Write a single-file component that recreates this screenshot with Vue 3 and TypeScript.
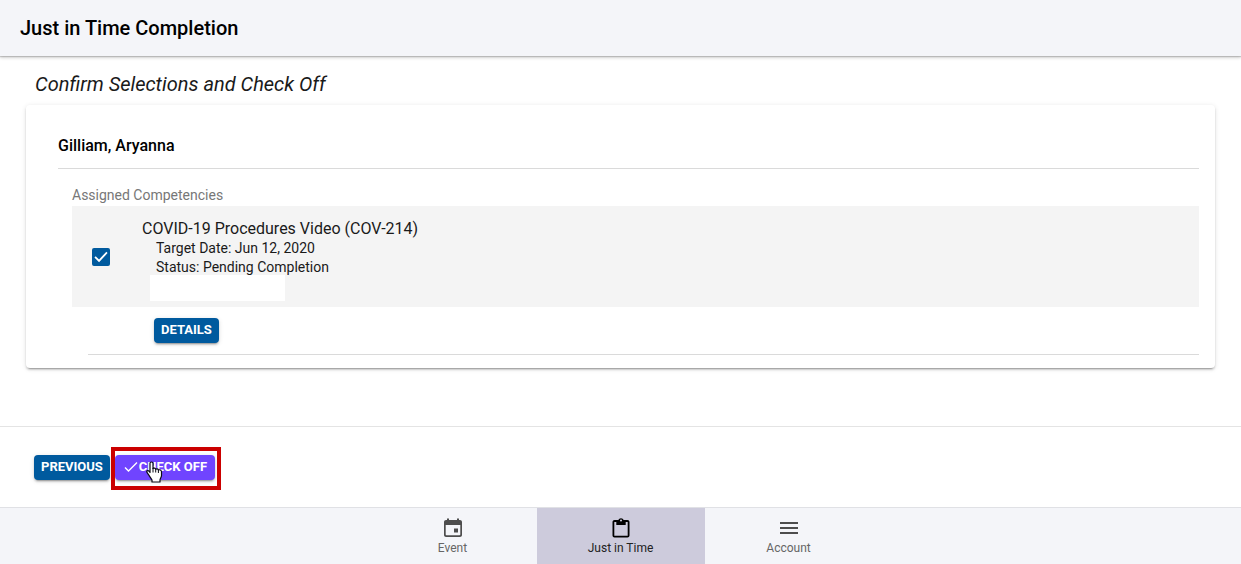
<script setup lang="ts">
import { ref } from 'vue'

interface Competency {
  id: string
  title: string
  targetDate: string
  status: string
}

const person = 'Gilliam, Aryanna'
const competencies: Competency[] = [
  {
    id: 'cov-214',
    title: 'COVID-19 Procedures Video (COV-214)',
    targetDate: 'Jun 12, 2020',
    status: 'Pending Completion',
  },
]
const selected = ref<string[]>(['cov-214'])

const tabs = [
  { key: 'event', label: 'Event' },
  { key: 'jit', label: 'Just in Time' },
  { key: 'account', label: 'Account' },
]
const activeTab = ref('jit')
</script>

<template>
  <div class="page">
    <header class="header">
      <h1>Just in Time Completion</h1>
    </header>

    <main class="content">
      <h2>Confirm Selections and Check Off</h2>
      <section class="card">
        <h3>{{ person }}</h3>
        <div class="group">
          <p class="group-label">Assigned Competencies</p>
          <template v-for="item in competencies" :key="item.id">
            <div class="row">
              <input :id="item.id" v-model="selected" type="checkbox" :value="item.id" />
              <div class="info">
                <label :for="item.id">{{ item.title }}</label>
                <p>Target Date: {{ item.targetDate }}</p>
                <p>Status: {{ item.status }}</p>
                <div class="blank"></div>
              </div>
            </div>
            <div class="row-actions">
              <button type="button" class="btn">DETAILS</button>
            </div>
          </template>
        </div>
      </section>
    </main>

    <footer class="actions">
      <button type="button" class="btn">PREVIOUS</button>
      <div class="highlighted">
        <button type="button" class="btn accent">
          <svg class="tick" viewBox="0 0 16 16" aria-hidden="true">
            <path d="M2 8.500 5.500 12 14 3.500" fill="none" stroke="currentColor" stroke-width="1.4" />
          </svg>
          CHECK OFF
        </button>
        <span class="frame"></span>
        <svg class="pointer" viewBox="0 0 17 22" aria-hidden="true">
          <path
            d="M5.500 1C6.500 1 7 1.600 7 2.500V7.500C7.600 6.800 9.400 7 9.700 8.200C10.500 7.500 12.100 7.800 12.400 9C13.300 8.500 15.500 8.800 15.500 10.800V14.500C15.500 16.500 14 17.500 14 19V21H6V19C5 17 3.600 15.500 2.500 13.500C1.800 12.300.700 11.400.700 10.500C1 9.300 2.500 9.500 3.300 10.500L4 11.500V2.500C4 1.600 4.500 1 5.500 1Z"
            fill="#fff"
            stroke="#0b0b14"
            stroke-width="1.2"
            stroke-linejoin="round"
          />
          <path d="M7 7V11.500M9.700 8V11.500M12.400 9V12" fill="none" stroke="#0b0b14" stroke-width="1" />
        </svg>
      </div>
    </footer>

    <nav class="tabs">
      <button
        v-for="tab in tabs"
        :key="tab.key"
        type="button"
        class="tab"
        :class="{ active: tab.key === activeTab }"
        @click="activeTab = tab.key"
      >
        <svg v-if="tab.key === 'event'" viewBox="0 0 22 22" aria-hidden="true">
          <path
            fill="currentColor"
            fill-rule="evenodd"
            d="M5 1.500h2V3h8V1.500h2V3h1c1.100 0 2 .9 2 2v13c0 1.100-.9 2-2 2H4c-1.100 0-2-.9-2-2V5c0-1.100.9-2 2-2h1zM3.700 8v9.500c0 .4.300.8.800.8h13c.500 0 .8-.4.800-.8V8zM12 11.500h4v4h-4z"
          />
        </svg>
        <svg v-else-if="tab.key === 'jit'" viewBox="0 0 22 22" aria-hidden="true">
          <path
            fill="currentColor"
            fill-rule="evenodd"
            d="M4.500 3h3.800a2.900 2.900 0 0 1 5.400 0h3.800c1.100 0 2 .9 2 2v13.500c0 1.100-.9 2-2 2h-13c-1.100 0-2-.9-2-2V5c0-1.100.9-2 2-2zM4.300 5v13.700h13.400V5h-2v3h-9.400V5zM11 2.500a1 1 0 1 0 0 2a1 1 0 0 0 0-2z"
          />
        </svg>
        <svg v-else viewBox="0 0 22 22" aria-hidden="true">
          <path fill="currentColor" d="M2 5h18v2H2zM2 10h18v2H2zM2 15h18v2H2z" />
        </svg>
        <span>{{ tab.label }}</span>
      </button>
    </nav>
  </div>
</template>

<style>
body {
  margin: 0;
}
</style>

<style scoped>
* {
  box-sizing: border-box;
}
h1,
h2,
h3,
p {
  margin: 0;
}
.page {
  display: flex;
  flex-direction: column;
  min-height: 100vh;
  background: #fff;
  color: #1a1a1a;
  font-family: Roboto, "Liberation Sans", sans-serif;
  font-size: 14px;
}
button {
  border: 0;
  font-family: inherit;
  cursor: pointer;
}
.header {
  padding: 16px 20px;
  background: #f4f5f9;
  box-shadow:
    0 1px 1px rgba(0, 0, 0, 0.16),
    0 2px 3px rgba(0, 0, 0, 0.16);
}
h1 {
  font-size: 20px;
  font-weight: 500;
  line-height: 24px;
  color: #000;
}
.content {
  flex: 1;
  padding: 16px 26px;
}
h2 {
  padding: 0 9px;
  font-size: 20px;
  font-style: italic;
  font-weight: 400;
  line-height: 24px;
}
.card {
  margin-top: 9px;
  padding: 26px 16px 13px 32px;
  border-radius: 4px;
  box-shadow:
    0 3px 1px -2px rgba(0, 0, 0, 0.2),
    0 2px 2px 0 rgba(0, 0, 0, 0.14),
    0 1px 5px 0 rgba(0, 0, 0, 0.12);
}
h3 {
  padding: 5px 0 13px;
  border-bottom: 1px solid #dadada;
  font-size: 16px;
  font-weight: 500;
  line-height: 19px;
  color: #000;
}
.group {
  padding: 16px 0 0 14px;
}
.group-label {
  line-height: 21px;
  color: #777;
}
.row {
  display: flex;
  align-items: flex-start;
  gap: 32px;
  padding: 13px 20px 6px;
  background: #f4f4f4;
}
input[type="checkbox"] {
  appearance: none;
  width: 18px;
  height: 18px;
  margin: 29px 0 0;
  border: 2px solid #005a9e;
  border-radius: 2px;
  background: #fff;
}
input[type="checkbox"]:checked {
  background: #005a9e;
}
input[type="checkbox"]:checked::after {
  content: "";
  display: block;
  width: 14px;
  height: 14px;
  background: #fff;
  clip-path: polygon(3% 54%, 12% 44%, 36% 68%, 88% 12%, 97% 22%, 36% 87%);
}
.info label {
  display: block;
  font-size: 16px;
  line-height: 20px;
}
.info p {
  padding-left: 14px;
  line-height: 19px;
}
/* The field overlaps the descenders of the line above it. */
.info .blank {
  position: relative;
  width: 135px;
  height: 26px;
  margin: -2px 0 0 8px;
  background: #fff;
}
.row-actions {
  margin-left: 16px;
  padding: 11px 66px;
  border-bottom: 1px solid #dadada;
}
.btn {
  height: 25px;
  padding: 0 7px 1px;
  border-radius: 4px;
  background: #005a9e;
  box-shadow:
    0 3px 1px -2px rgba(0, 0, 0, 0.2),
    0 2px 2px 0 rgba(0, 0, 0, 0.14),
    0 1px 5px 0 rgba(0, 0, 0, 0.12);
  color: #fff;
  font-size: 13px;
  font-weight: 700;
  line-height: 24px;
}
.row-actions .btn {
  display: block;
}
.actions {
  display: flex;
  align-items: center;
  gap: 5px;
  height: 81px;
  padding: 0 34px;
  border-top: 1px solid #e4e4e4;
}
.highlighted {
  position: relative;
}
.accent {
  display: flex;
  align-items: center;
  padding: 0 8px 1px;
  background: #7044ff;
}
.tick {
  width: 16px;
  height: 16px;
}
.frame {
  position: absolute;
  inset: -8px -6px -10px -4px;
  border: 4px solid #cb0000;
  pointer-events: none;
}
.pointer {
  position: absolute;
  top: 6px;
  left: 31px;
  width: 17px;
  height: 22px;
  pointer-events: none;
}
.tabs {
  display: flex;
  justify-content: center;
  height: 57px;
  border-top: 1px solid #e0e1e5;
  background: #f4f5f9;
}
.tab {
  display: flex;
  flex: 0 1 168px;
  flex-direction: column;
  align-items: center;
  justify-content: center;
  padding: 2px 0 0;
  background: none;
  color: #4d4d4d;
  font-size: 12px;
  line-height: 18px;
}
.tab span {
  color: #666;
}
.tab svg {
  width: 22px;
  height: 22px;
}
.tab.active {
  background: #cdcbdc;
  color: #000;
}
.tab.active span {
  color: #222;
}
</style>
